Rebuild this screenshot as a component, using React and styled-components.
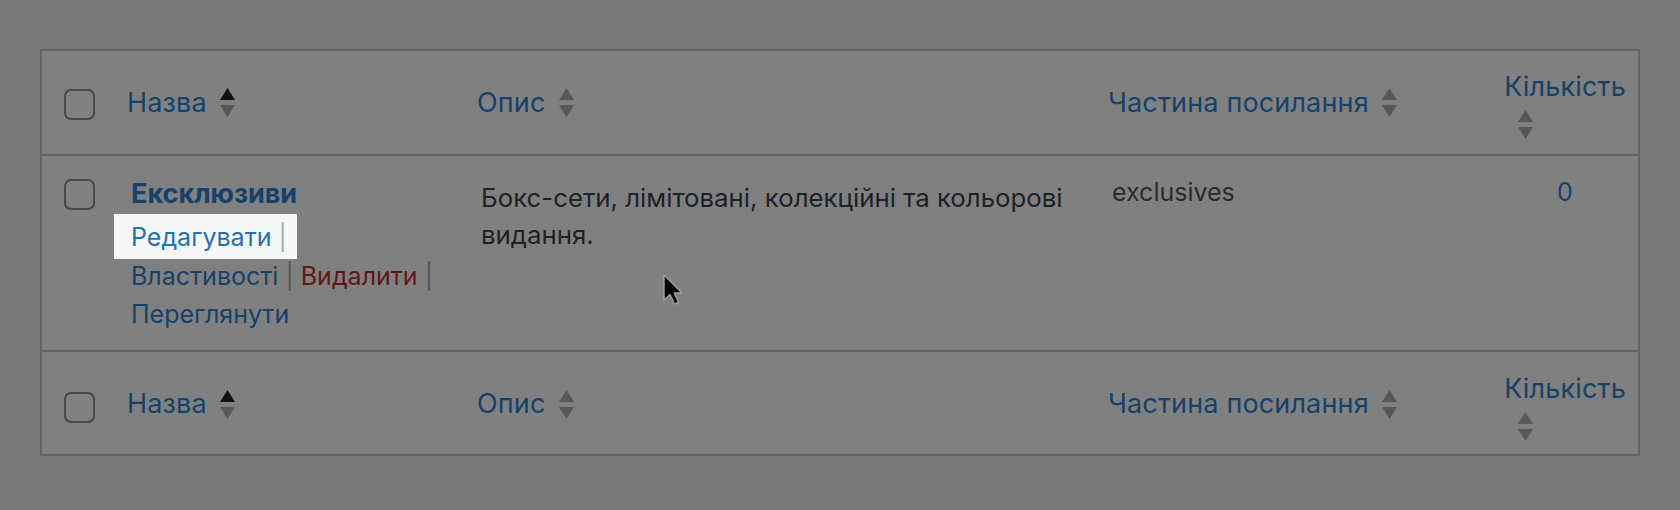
import React from 'react';
import styled, { createGlobalStyle } from 'styled-components';

const C = {
  pageBg: '#787878',
  tableBg: '#808080',
  border: '#626364',
  link: '#15416a',
  linkBright: '#2271b1',
  text: '#1e2125',
  muted: '#282b2f',
  sep: '#545557',
  sepBright: '#a7aaad',
  danger: '#5e1818',
  arrowOn: '#0f1214',
  arrowOff: '#555759',
  checkBorder: '#46484a',
  highlight: '#f6f7f7',
};

const GlobalStyle = createGlobalStyle`
  html, body { margin: 0; padding: 0; background: ${C.pageBg}; }
  body { font-family: Inter, "Noto Sans", sans-serif; -webkit-font-smoothing: antialiased; }
`;

const Page = styled.div`
  position: relative;
  box-sizing: border-box;
  height: 510px;
  padding: 49px 40px 0 40px;
  overflow: hidden;
`;

const Table = styled.div`
  width: 1600px;
  box-sizing: border-box;
  border: 2px solid ${C.border};
  background: ${C.tableBg};
`;

const COLS = '69px 350px 631px 400px 146px';

const Row = styled.div`
  display: grid;
  grid-template-columns: ${COLS};
  box-sizing: content-box;
  height: ${(p) => (p.$h ? `${p.$h}px` : 'auto')};
  padding-top: ${(p) => p.$pt || 0}px;
  border-bottom: ${(p) => (p.$last ? 'none' : `2px solid ${C.border}`)};
`;

const CheckCell = styled.div`
  padding: ${(p) => p.$top}px 0 0 22px;
`;

const Checkbox = styled.span`
  display: block;
  width: 31px;
  height: 31px;
  box-sizing: border-box;
  border: 2px solid ${C.checkBorder};
  border-radius: 7px;
`;

const HeadCell = styled.div`
  display: flex;
  align-items: center;
  padding-left: 16px;
`;

const SortLink = styled.span`
  display: flex;
  align-items: center;
  gap: 13px;
  font-size: 27px;
  line-height: 36px;
  letter-spacing: 0.15px;
  color: ${C.link};
  white-space: nowrap;
`;

const StackedHead = styled.div`
  display: flex;
  flex-direction: column;
  align-items: center;
  justify-content: center;
  padding-top: 3px;
`;

const StackedLabel = styled.span`
  font-size: 27px;
  line-height: 36px;
  letter-spacing: 0.15px;
  color: ${C.link};
`;

const StackedIndicator = styled.span`
  display: block;
  align-self: flex-start;
  margin: 5px 0 0 26px;
  height: 29px;
`;

const Cell = styled.div`
  padding: ${(p) => p.$pt || 17}px 20px 16px;
  font-size: ${(p) => p.$size || 25}px;
  line-height: ${(p) => p.$lh || 39}px;
  color: ${(p) => p.$color || C.text};
  text-align: ${(p) => p.$align || 'left'};
`;

const Title = styled.strong`
  display: block;
  font-size: 27px;
  line-height: 39px;
  font-weight: 700;
  color: ${C.link};
`;

const RowActions = styled.div`
  width: 305px;
  padding-top: 5px;
  font-size: 25px;
  line-height: 38.5px;
`;

const Action = styled.span`
  color: ${(p) => (p.$hl ? C.linkBright : p.$danger ? C.danger : C.link)};
`;

const ActionGroup = styled.span`
  white-space: nowrap;
  ${(p) =>
    p.$hl &&
    `
    background: ${C.highlight};
    padding: 8px 0 7px;
    box-shadow: -17px 0 0 0 ${C.highlight}, 10px 0 0 0 ${C.highlight};
  `}
`;

const Sep = styled.span`
  color: ${(p) => (p.$hl ? C.sepBright : C.sep)};
`;

const CountLink = styled.span`
  color: ${C.link};
`;

const Cursor = styled.svg`
  position: absolute;
  left: 662px;
  top: 273px;
  pointer-events: none;
`;

function SortIndicator({ active }) {
  return (
    <svg width="15" height="29" viewBox="0 0 15 29" aria-hidden="true">
      <path d="M7.5 0 L15 12 L0 12 Z" fill={active ? C.arrowOn : C.arrowOff} />
      <path d="M0 17 L15 17 L7.5 29 Z" fill={C.arrowOff} />
    </svg>
  );
}

function HeaderRow({ h, pt, last, top }) {
  return (
    <Row $h={h} $pt={pt} $last={last}>
      <CheckCell $top={top}>
        <Checkbox />
      </CheckCell>
      <HeadCell>
        <SortLink>
          Назва <SortIndicator active />
        </SortLink>
      </HeadCell>
      <HeadCell>
        <SortLink>
          Опис <SortIndicator />
        </SortLink>
      </HeadCell>
      <HeadCell>
        <SortLink>
          Частина посилання <SortIndicator />
        </SortLink>
      </HeadCell>
      <StackedHead>
        <StackedLabel>Кількість</StackedLabel>
        <StackedIndicator>
          <SortIndicator />
        </StackedIndicator>
      </StackedHead>
    </Row>
  );
}

export default function App() {
  return (
    <>
      <GlobalStyle />
      <Page>
        <Table>
          <HeaderRow h={103} top={38} />
          <Row>
            <CheckCell $top={23}>
              <Checkbox />
            </CheckCell>
            <Cell $pt={18}>
              <Title>Ексклюзиви</Title>
              <RowActions>
                <ActionGroup $hl>
                  <Action $hl>Редагувати</Action> <Sep $hl>|</Sep>
                </ActionGroup>{' '}
                <ActionGroup>
                  <Action>Властивості</Action> <Sep>|</Sep>
                </ActionGroup>{' '}
                <ActionGroup>
                  <Action $danger>Видалити</Action> <Sep>|</Sep>
                </ActionGroup>{' '}
                <ActionGroup>
                  <Action>Переглянути</Action>
                </ActionGroup>
              </RowActions>
            </Cell>
            <Cell $pt={23} $size={25.8} $lh={37}>
              Бокс-сети, лімітовані, колекційні та кольорові видання.
            </Cell>
            <Cell $color={C.muted}>exclusives</Cell>
            <Cell $align="center">
              <CountLink>0</CountLink>
            </Cell>
          </Row>
          <HeaderRow h={99} pt={3} last top={37} />
        </Table>
        <Cursor width="22" height="34" viewBox="0 0 22 34" aria-hidden="true">
          <path
            d="M2 2 L2 27 L8 21.5 L12.5 31 L16.5 29.3 L12.3 20 L20 20 Z"
            fill="#000"
            stroke="#a0a0a0"
            strokeWidth="1.4"
            strokeLinejoin="round"
          />
        </Cursor>
      </Page>
    </>
  );
}
